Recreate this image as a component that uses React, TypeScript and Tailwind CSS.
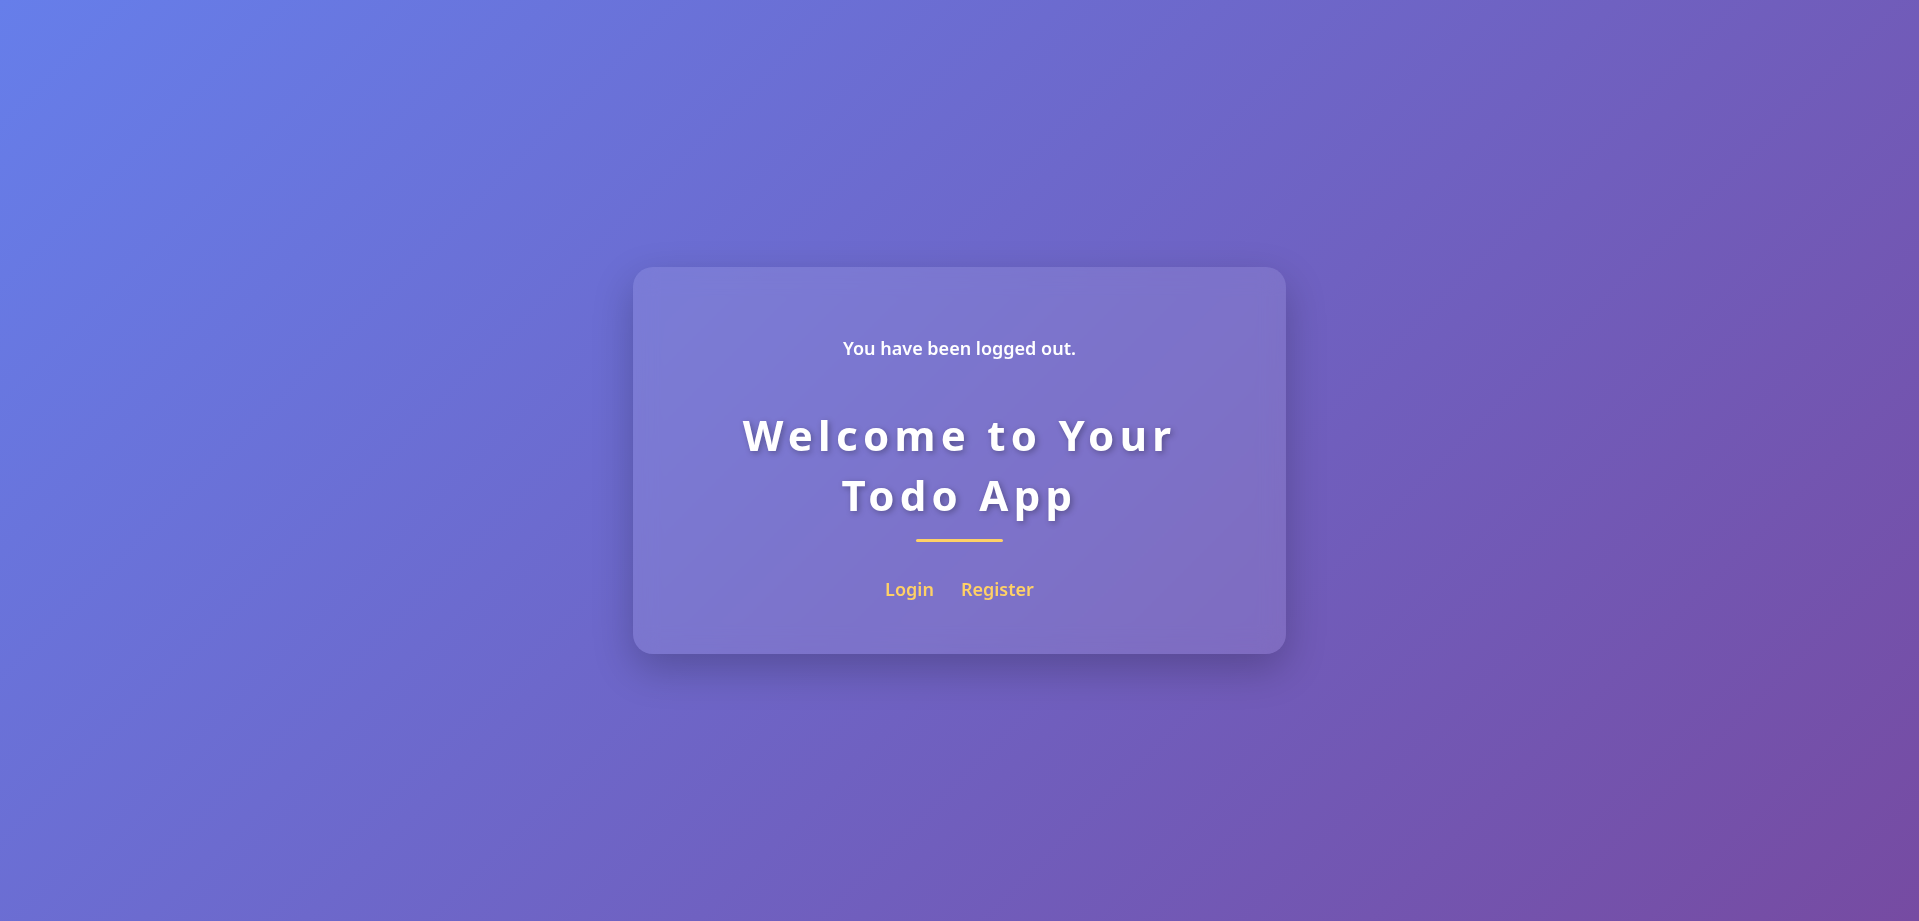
export default function App() {
  return (
    <div className="min-h-screen w-full flex items-center justify-center bg-[linear-gradient(135deg,#667eea_0%,#764ba2_100%)] font-['Noto_Sans',sans-serif]">
      {/* Card */}
      <div className="w-[653px] h-[387px] rounded-[20px] bg-white/10 shadow-[0_15px_40px_rgba(0,0,0,0.22)] backdrop-blur-md flex flex-col items-center pt-[68px] text-center">
        <p className="text-[18px] leading-[27px] font-semibold text-white">You have been logged out.</p>

        <h1 className="mt-[43px] text-[42px] leading-[60px] font-bold text-white tracking-[5.3px] [text-shadow:2px_2px_6px_rgba(0,0,0,0.3)]">
          Welcome to Your
          <br />
          Todo App
        </h1>
        <div className="mt-[14px] w-[87px] h-[3px] rounded-full bg-[#ffd166]"></div>

        <div className="mt-[34px] flex gap-[27px] text-[18px] leading-[27px] font-semibold text-[#ffd166]">
          <a href="#">Login</a>
          <a href="#">Register</a>
        </div>
      </div>
    </div>
  )
}
